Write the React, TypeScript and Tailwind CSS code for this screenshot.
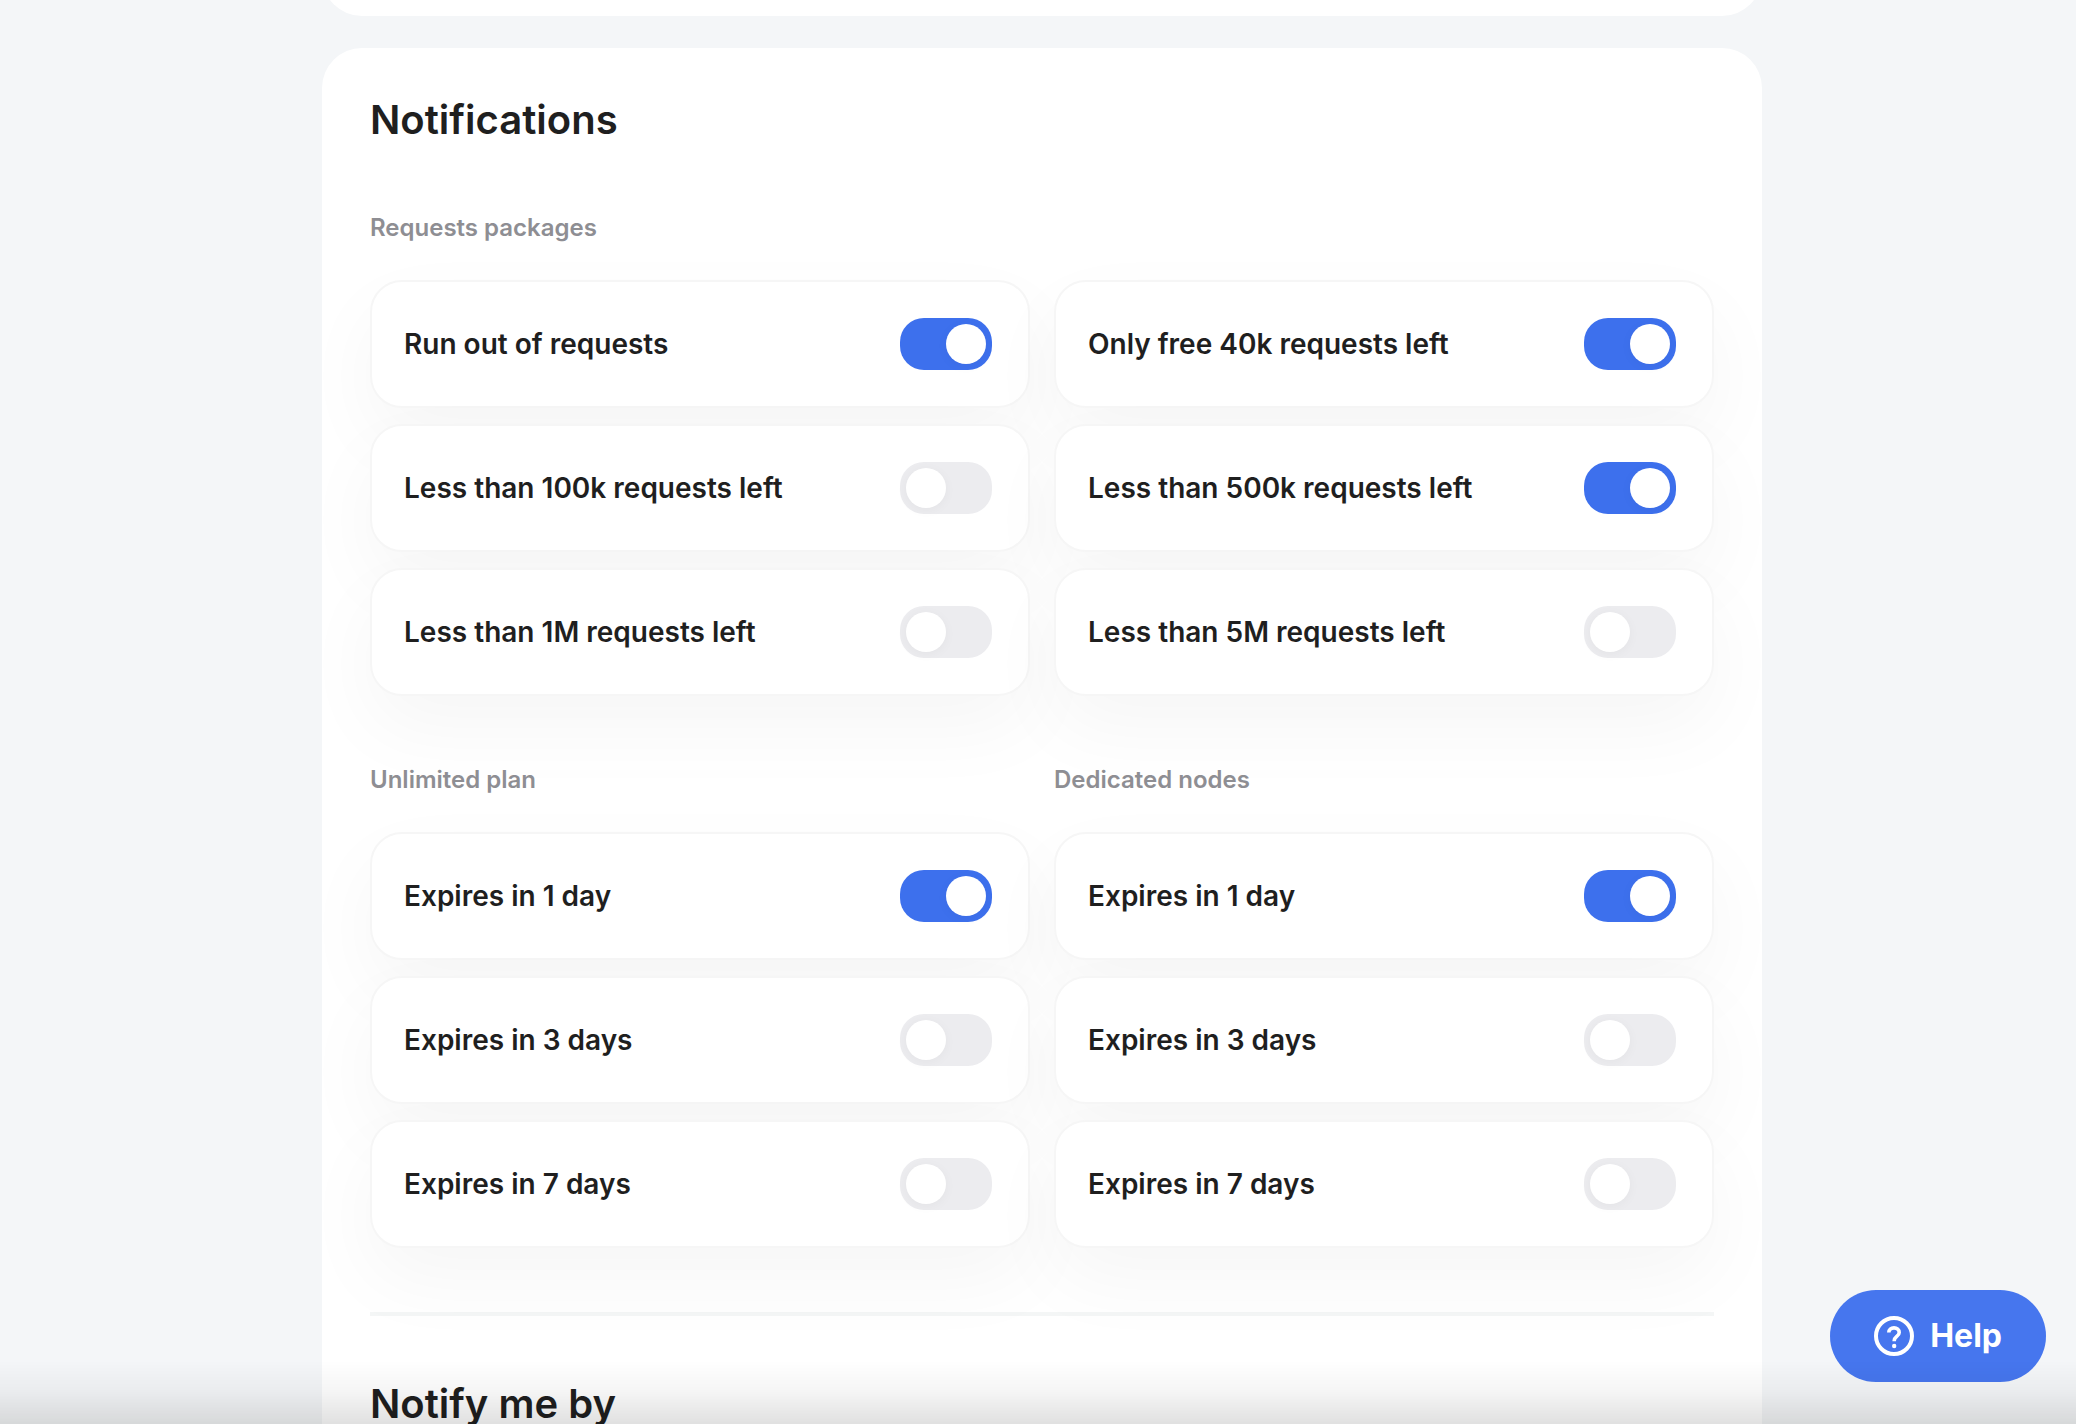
import React from "react";

interface Option {
    id: string;
    label: string;
    enabled: boolean;
}

const requestOptions: Option[] = [
    { id: "req-out", label: "Run out of requests", enabled: true },
    { id: "req-40k", label: "Only free 40k requests left", enabled: true },
    { id: "req-100k", label: "Less than 100k requests left", enabled: false },
    { id: "req-500k", label: "Less than 500k requests left", enabled: true },
    { id: "req-1m", label: "Less than 1M requests left", enabled: false },
    { id: "req-5m", label: "Less than 5M requests left", enabled: false },
];

const unlimitedOptions: Option[] = [
    { id: "plan-1", label: "Expires in 1 day", enabled: true },
    { id: "plan-3", label: "Expires in 3 days", enabled: false },
    { id: "plan-7", label: "Expires in 7 days", enabled: false },
];

const dedicatedOptions: Option[] = [
    { id: "node-1", label: "Expires in 1 day", enabled: true },
    { id: "node-3", label: "Expires in 3 days", enabled: false },
    { id: "node-7", label: "Expires in 7 days", enabled: false },
];

const ToggleCard = ({ id, label, enabled }: Option) => (
    <div className="flex h-32 items-center justify-between rounded-[32px] border-2 border-[#f6f6f6] bg-white pr-9 pl-8 shadow-[0_32px_80px_rgba(0,0,0,0.04)]">
        <label htmlFor={id} className="text-[28px] leading-9 font-semibold">
            {label}
        </label>
        <input
            id={id}
            type="checkbox"
            role="switch"
            defaultChecked={enabled}
            className="h-[52px] w-[92px] shrink-0 cursor-pointer appearance-none rounded-3xl bg-[#ececef] p-1.5 before:block before:size-10 before:rounded-full before:bg-white before:shadow-[0_2px_12px_rgba(0,0,0,0.04)] checked:bg-[#3d70ed] checked:before:ml-10"
        />
    </div>
);

const GroupTitle = ({ children }: { children: React.ReactNode }) => (
    <h3 className="mt-[68px] mb-9 text-2xl leading-8 font-semibold text-[#8e8e93]">
        {children}
    </h3>
);

const HelpIcon = () => (
    <svg
        viewBox="0 0 40 40"
        fill="none"
        stroke="currentColor"
        strokeWidth="4"
        className="size-10"
        aria-hidden="true"
    >
        <circle cx="20" cy="20" r="18" />
        <path
            d="M14.8 16.6c0-2.9 2.2-4.7 5.2-4.7s5.2 1.9 5.2 4.5c0 4.1-5 4-5 8.3v.6"
            strokeWidth="3.6"
        />
        <circle cx="20.2" cy="30" r="2.2" fill="currentColor" stroke="none" />
    </svg>
);

const App = () => {
    return (
        <div className="h-screen overflow-hidden bg-[#f4f6f8] pl-2 font-['Inter',sans-serif] text-[#1f1f1f]">
            <main className="mx-auto flex max-w-[1440px] flex-col gap-8">
                <div className="-mt-16 h-20 rounded-b-[40px] bg-white" />

                <section className="overflow-hidden rounded-[40px] bg-white p-12">
                    <h2 className="text-[40px] leading-[48px] font-semibold">
                        Notifications
                    </h2>

                    <GroupTitle>Requests packages</GroupTitle>
                    <div className="grid grid-cols-2 gap-x-6 gap-y-4">
                        {requestOptions.map((o) => (
                            <ToggleCard key={o.id} {...o} />
                        ))}
                    </div>

                    <div className="grid grid-cols-2 gap-x-6">
                        <div>
                            <GroupTitle>Unlimited plan</GroupTitle>
                            <div className="flex flex-col gap-4">
                                {unlimitedOptions.map((o) => (
                                    <ToggleCard key={o.id} {...o} />
                                ))}
                            </div>
                        </div>
                        <div>
                            <GroupTitle>Dedicated nodes</GroupTitle>
                            <div className="flex flex-col gap-4">
                                {dedicatedOptions.map((o) => (
                                    <ToggleCard key={o.id} {...o} />
                                ))}
                            </div>
                        </div>
                    </div>

                    <hr className="my-16 border-t-4 border-[#f4f6f6]" />

                    <h2 className="text-[40px] leading-[48px] font-semibold">
                        Notify me by
                    </h2>
                </section>
            </main>

            <button
                type="button"
                className="fixed right-[30px] bottom-[42px] flex h-[92px] items-center gap-4 rounded-full bg-[#4676ee] px-11 text-[32px] leading-9 font-bold text-white"
            >
                <HelpIcon />
                Help
            </button>

            {/* fade at the bottom edge of the window */}
            <div className="pointer-events-none fixed inset-x-0 bottom-0 h-16 bg-linear-to-t from-black/12 via-black/4 to-transparent" />
        </div>
    );
};

export default App;
